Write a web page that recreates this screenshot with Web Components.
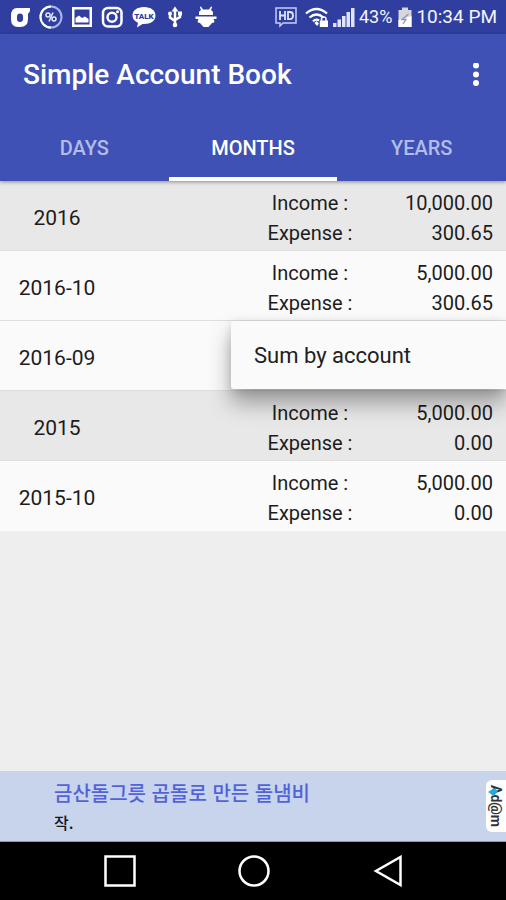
<!DOCTYPE html>
<html lang="en">
<head>
<meta charset="utf-8">
<meta name="viewport" content="width=device-width, initial-scale=1">
<title>Simple Account Book</title>
<style>
  body { margin: 0; font-family: Roboto, "Noto Sans CJK KR", sans-serif; background: #eee; color: #1c1c1c; }
</style>
</head>
<body>
<account-app></account-app>
<script>
const define = (name, html, setup) => {
  const template = document.createElement('template');
  template.innerHTML = html;
  customElements.define(name, class extends HTMLElement {
    constructor() {
      super();
      this.attachShadow({ mode: 'open' }).append(template.content.cloneNode(true));
    }
    connectedCallback() { if (setup) setup(this, this.shadowRoot); }
  });
};

define('status-bar', `
<style>
  :host { display: flex; justify-content: space-between; align-items: center; height: 34px; padding: 0 9px 0 10px; background: #303f9f; color: #f4f5ff; box-sizing: border-box; white-space: nowrap; }
  div { display: flex; align-items: center; }
  .notices { gap: 9px; }
  .system { gap: 4px; }
  svg { display: block; height: 24px; flex: none; }
  .percent { font-size: 18px; line-height: 24px; margin-right: 2px; }
  .time { font-size: 19px; line-height: 24px; }
</style>
<div class="notices">
  <svg width="20" viewBox="0 0 20 24" aria-hidden="true"><path fill="#fff" fill-rule="evenodd" d="M7 3H20V6Q19 8 18 8.500V14Q18 22 10 22H8Q1 22 1 14V11Q1 3 7 3ZM10 8.500Q7 8.500 7 11.500V14Q7 17 10 17T13 14V11.500Q13 8.500 10 8.500Z"/></svg>
  <svg width="24" viewBox="0 0 24 24" aria-hidden="true"><circle cx="12" cy="12" r="10.500" fill="none" stroke="#aab5ee" stroke-width="2"/><path d="M12 22.500A10.500 10.500 0 0 1 12 1.500" fill="none" stroke="#fff" stroke-width="2"/><g fill="none" stroke="#e6e9ff" stroke-width="1.500"><circle cx="9" cy="10" r="2"/><circle cx="15" cy="14" r="2"/><path d="M14 7.500 10 16.500"/></g></svg>
  <svg width="20" viewBox="0 0 20 24" aria-hidden="true"><path fill="#fff" fill-rule="evenodd" d="M0 2H20V22H0ZM2.500 4.500V19.500H17.500V4.500Z"/><path fill="#fff" d="M3.500 17.500V13L7 10.500 10 13 13 11.500 16.500 14V17.500Z"/></svg>
  <svg width="22" viewBox="0 0 22 24" aria-hidden="true"><g fill="none" stroke="#fff" stroke-width="2.500"><rect x="2" y="3" width="18.500" height="18.500" rx="5"/><circle cx="11" cy="12.300" r="4.500"/></g><circle cx="16.500" cy="6.800" r="1.500" fill="#fff"/></svg>
  <svg width="24" viewBox="0 0 24 24" aria-hidden="true"><path fill="#fff" d="M12 2C5 2 .5 5.500 .5 10.500C.5 14 3 16.500 6 17.800L5 22.500 10.500 19H12C19 19 23.500 15.500 23.500 10.500S19 2 12 2Z"/><text x="12" y="13.500" font-size="8" font-weight="900" text-anchor="middle" fill="#303f9f" font-family="Roboto, sans-serif">TALK</text></svg>
  <svg width="20" viewBox="0 0 20 24" aria-hidden="true"><g stroke="#fff" stroke-width="2.500" fill="none"><path d="M10 5V19M5 9V12.500L10 16M15 8V12L10 15"/></g><g fill="#fff"><path d="M10 1.500 13.500 6.500H6.500Z"/><circle cx="10" cy="20" r="2.300"/><circle cx="5" cy="8.500" r="2"/><path d="M13 6.500H17V10.500H13Z"/></g></svg>
  <svg width="24" viewBox="0 0 24 24" aria-hidden="true"><g fill="#fff"><path d="M5 10V7.500Q5 6 7 5L5.800 2 7 1.500 9 4.500H15L17 1.500 18.200 2 17 5Q19 6 19 7.500V10Z"/><path d="M1.500 11.500H22.500V14H19.500Q21 16 20 17.500L18 18 14.500 22H9.500L6 18 4 17.500Q3 16 4.500 14H1.500Z"/></g></svg>
</div>
<div class="system">
  <svg width="26" viewBox="0 0 26 24" aria-hidden="true"><path d="M1 3H21V18H8L5 21V18H1Z" fill="none" stroke="#c6cdf6" stroke-width="1.500"/><g fill="none" stroke="#dfe3ff" stroke-width="1.800"><path d="M5 6V15M10 6V15M5 10.500H10M13 7H15Q18 7 18 10.500T15 14.200H13Z"/></g></svg>
  <svg width="24" viewBox="0 0 24 24" aria-hidden="true"><g fill="none" stroke="#fff" stroke-width="2.300"><path d="M1 8.500Q11.500-.5 22 8.500M4.500 12.500Q11.500 6.500 18.500 12.500M8 16.300Q11 13.500 14 15.500"/><path d="M16.500 16V14Q16.500 12 18.800 12T21 14V16" stroke-width="1.500"/></g><path fill="#fff" d="M9.500 18 11.500 16 14 18.500 12 21ZM14.800 15.500H23V22H14.800Z"/></svg>
  <svg width="22" viewBox="0 0 22 24" aria-hidden="true"><path fill="#dfe3ff" d="M0 18H3.500V22H0ZM4.500 14.500H8V22H4.500ZM9 11H12.500V22H9ZM13.500 7H17V22H13.500ZM18 3H21.500V22H18Z"/></svg>
  <span class="percent">43%</span>
  <svg width="14" viewBox="0 0 14 24" aria-hidden="true"><path fill="#d6d7dc" d="M4 2.500H10V5H13.500V22H.5V5H4Z"/><path fill="#fff" d="M.5 15 13.500 11V22H.5Z"/><path d="M10.500 9 4 14.500H8L5 19" stroke="#8d93ad" stroke-width="1.300" fill="none"/></svg>
  <span class="time">10:34 PM</span>
</div>`);

define('app-bar', `
<style>
  :host { display: flex; align-items: center; justify-content: space-between; height: 79px; padding: 2px 18px 0 23px; box-sizing: border-box; color: #fff; }
  h1 { margin: 0; font-size: 28px; line-height: 36px; font-weight: 500; }
  button { border: 0; padding: 0; background: none; color: inherit; width: 24px; height: 40px; }
  svg { display: block; margin: auto; }
</style>
<h1><slot></slot></h1>
<button aria-label="More options"><svg width="8" height="24" viewBox="0 0 8 24"><g fill="currentColor"><circle cx="4" cy="2.500" r="3"/><circle cx="4" cy="11.500" r="3"/><circle cx="4" cy="20" r="3"/></g></svg></button>`);

define('tab-item', `
<style>
  :host { display: block; flex: 1; }
  button { display: block; width: 100%; height: 68px; border: 0; border-bottom: 4px solid transparent; padding: 6px 0 0; background: none; color: #b3bce8; font: 500 20px/24px Roboto, sans-serif; }
  :host([selected]) button { color: #fff; border-color: #fff; }
</style>
<button role="tab"><slot></slot></button>`,
(host, root) => root.querySelector('button').setAttribute('aria-selected', host.hasAttribute('selected')));

define('context-menu', `
<style>
  :host { position: absolute; z-index: 1; top: 0; right: 0; width: 275px; background: #fafafa; border-radius: 3px 0 0 3px; box-shadow: 0 14px 22px rgba(0,0,0,.34), 0 2px 10px rgba(0,0,0,.12); }
  button { display: block; width: 100%; height: 68px; border: 0; padding: 2px 23px 0; background: none; text-align: left; color: #202020; font: 400 22px/28px Roboto, sans-serif; }
</style>
<div role="menu"><button role="menuitem"><slot></slot></button></div>`);

define('ledger-table', `
<style>
  :host { display: block; }
  table { width: 100%; border-collapse: separate; border-spacing: 0; table-layout: fixed; }
  tr { height: 70px; background: #fafafa; position: relative; }
  tr.year { background: #e8e8e8; }
  th, td { height: 70px; box-sizing: border-box; padding: 0; border-bottom: 1px solid #dedede; font-weight: 400; }
  tr:last-child > * { border-bottom-color: #fafafa; }
  th { font-size: 21px; line-height: 28px; padding-top: 5px; }
  td { font-size: 20px; line-height: 30px; padding-top: 4px; }
  td span { display: block; }
  .kind { text-align: center; }
  .sum { text-align: right; padding-right: 13px; }
</style>
<table aria-label="Totals by month">
  <colgroup><col style="width:114px"><col><col style="width:114px"><col style="width:139px"></colgroup>
  <tbody></tbody>
</table>`,
(host, root) => {
  const rows = [
    ['2016', '10,000.00', '300.65'],
    ['2016-10', '5,000.00', '300.65'],
    ['2016-09'],
    ['2015', '5,000.00', '0.00'],
    ['2015-10', '5,000.00', '0.00'],
  ];
  root.querySelector('tbody').innerHTML = rows.map(([date, income, expense]) => `
    <tr class="${date.length === 4 ? 'year' : 'month'}"><th scope="row">${date}</th>${income
      ? `<td></td><td class="kind"><span>Income :</span><span>Expense :</span></td><td class="sum"><span>${income}</span><span>${expense}</span></td>`
      : '<td colspan="3"><context-menu>Sum by account</context-menu></td>'}</tr>`).join('');
});

define('ad-banner', `
<style>
  :host { display: flex; align-items: center; height: 71px; box-sizing: border-box; background: #c8d4ec; border-bottom: 1px solid #8e99b4; }
  .copy { flex: 1; padding: 2px 0 0 54px; text-decoration: none; color: #16181f; font-family: "Noto Sans CJK KR", sans-serif; }
  strong, span { display: block; }
  strong { color: #5263d9; font-size: 20px; line-height: 30px; font-weight: 500; }
  .copy span { font-size: 16px; line-height: 28px; font-weight: 500; }
  .brand { display: flex; align-items: center; justify-content: center; position: relative; width: 20px; height: 52px; border-radius: 6px 0 0 6px; background: #fff; color: #333; text-decoration: none; writing-mode: vertical-rl; font: 700 14px/20px Roboto, sans-serif; }
  .brand svg { position: absolute; top: 8px; left: 2px; }
</style>
<a class="copy" href="#ad" lang="ko"><strong>금산돌그릇 곱돌로 만든 돌냄비</strong><span>작.</span></a>
<a class="brand" href="#about-ads">Ad@m<svg width="10" height="8" viewBox="0 0 10 8" aria-hidden="true"><path d="M0 4 6 0 10 3 6 8Z" fill="#25a9dc"/></svg></a>`);

define('system-nav', `
<style>
  :host { display: flex; height: 58px; padding: 0 52px 0 53px; background: #000; }
  button { flex: 1; border: 0; padding: 0; background: none; color: #fff; }
  svg { display: block; margin: auto; fill: none; stroke: currentColor; stroke-width: 2.500; }
</style>
<button aria-label="Recent apps"><svg width="32" height="32"><rect x="1.500" y="1.500" width="29" height="29"/></svg></button>
<button aria-label="Home"><svg width="32" height="32"><circle cx="16" cy="16" r="14.500"/></svg></button>
<button aria-label="Back"><svg width="32" height="32"><path d="M29.500 2V30L5 16Z"/></svg></button>`);

define('account-app', `
<style>
  :host { display: flex; flex-direction: column; min-height: 100vh; }
  header { position: relative; z-index: 1; background: #3f51b5; box-shadow: 0 1px 4px rgba(0,0,0,.4); }
  nav { display: flex; }
  main { flex: 1; }
</style>
<status-bar></status-bar>
<header>
  <app-bar>Simple Account Book</app-bar>
  <nav role="tablist"><tab-item>DAYS</tab-item><tab-item selected>MONTHS</tab-item><tab-item>YEARS</tab-item></nav>
</header>
<main><ledger-table></ledger-table></main>
<ad-banner></ad-banner>
<system-nav></system-nav>`);
</script>
</body>
</html>
